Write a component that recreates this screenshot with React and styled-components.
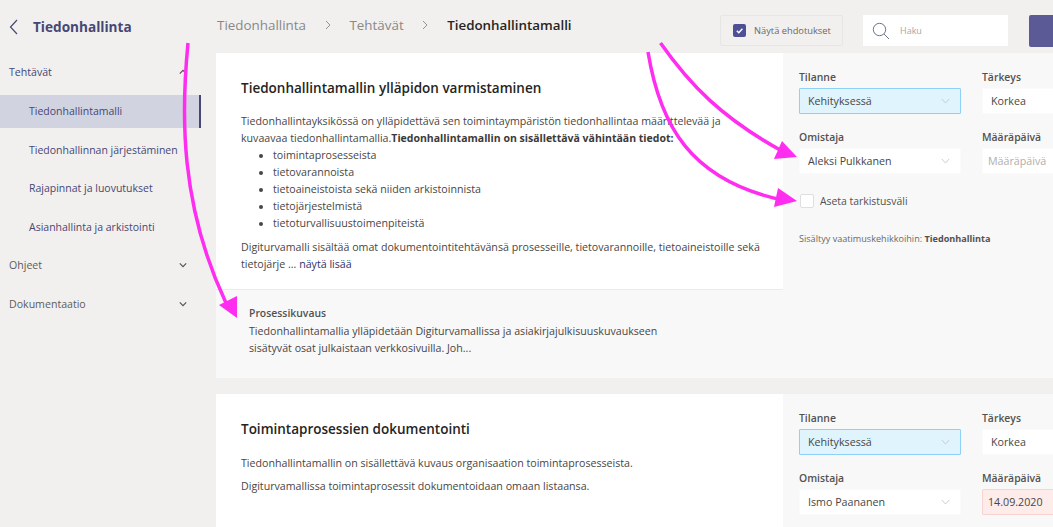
import React from "react";
import styled, { createGlobalStyle } from "styled-components";

const Global = createGlobalStyle`
  html, body { margin: 0; padding: 0; background: #f1f0ef; }
  * { box-sizing: border-box; }
`;

const Page = styled.div`
  position: relative;
  width: 1053px;
  height: 527px;
  overflow: hidden;
  display: flex;
  background: #f1f0ef;
  font-family: "Open Sans", "Noto Sans", sans-serif;
  color: #484644;
`;

const Sidebar = styled.aside`
  width: 216px;
  flex: none;
  display: flex;
  flex-direction: column;
`;

const SideHeader = styled.div`
  height: 53px;
  display: flex;
  align-items: center;
  gap: 14px;
  padding-left: 9px;
  font-size: 13.6px;
  font-weight: 700;
  color: #464775;
  svg { flex: none; }
`;

const Group = styled.div`
  width: 190px;
  height: 38.5px;
  padding: 0 0 0 9px;
  display: flex;
  align-items: center;
  justify-content: space-between;
  font-size: 10.6px;
  color: ${(p) => (p.$open ? "#464775" : "#5e5c5a")};
  svg { margin-right: 3px; }
`;

const NavItem = styled.div`
  width: 201px;
  height: ${(p) => (p.$active ? "33px" : "38.5px")};
  margin: ${(p) => (p.$active ? "3px 0" : "0")};
  padding: 0 0 0 29px;
  display: flex;
  align-items: center;
  font-size: 10.5px;
  white-space: nowrap;
  color: #464775;
  background: ${(p) => (p.$active ? "#d2d3e1" : "transparent")};
  border-right: ${(p) => (p.$active ? "2px solid #464775" : "none")};
`;

const Main = styled.main`
  flex: 1;
  min-width: 0;
  display: flex;
  flex-direction: column;
`;

const TopBar = styled.header`
  height: 53px;
  flex: none;
  display: flex;
  align-items: flex-start;
  padding: 15px 0 0 1px;
`;

const Crumbs = styled.nav`
  width: 503px;
  height: 20px;
  margin-right: 0;
  display: flex;
  align-items: center;
  font-size: 13.4px;
  color: #8a8886;
  flex: none;
`;

const CrumbSep = styled.span`
  width: 43.5px;
  display: flex;
  justify-content: center;
`;

const CrumbCurrent = styled.span`
  font-weight: 600;
  color: #252423;
  font-size: 13.35px;
`;

const SuggestToggle = styled.div`
  width: 123px;
  height: 31px;
  border: 1px solid #e8e6e5;
  border-radius: 2px;
  display: flex;
  align-items: center;
  gap: 8px;
  padding-left: 12px;
  font-size: 9.3px;
  color: #6a6866;
  white-space: nowrap;
  flex: none;
`;

const CheckedBox = styled.span`
  width: 13px;
  height: 13px;
  border-radius: 2px;
  background: #4f4f95;
  display: flex;
  align-items: center;
  justify-content: center;
`;

const Search = styled.div`
  width: 145px;
  height: 31px;
  margin-left: 20px;
  background: #fff;
  display: flex;
  align-items: center;
  gap: 10px;
  padding-left: 9px;
  font-size: 9px;
  color: #a8a6a4;
  flex: none;
`;

const PrimaryButton = styled.div`
  width: 30px;
  height: 32px;
  margin-left: 21px;
  flex: none;
  background: #5b5a97;
  border-radius: 2px;
`;

const Card = styled.section`
  display: flex;
  margin-bottom: 16px;
  flex: none;
  height: ${(p) => p.$h}px;
`;

const CardBody = styled.div`
  width: 567px;
  flex: none;
  display: flex;
  flex-direction: column;
  background: #fff;
`;

const CardText = styled.div`
  padding: 26px 0 0 25px;
  height: ${(p) => p.$h}px;
  flex: none;
`;

const CardTitle = styled.h2`
  margin: 0 0 ${(p) => p.$mb ?? 16}px;
  font-size: 13.5px;
  line-height: 18px;
  font-weight: 600;
  color: #252423;
  white-space: nowrap;
`;

const Para = styled.p`
  margin: 0 0 ${(p) => p.$mb ?? 0}px;
  font-size: 10.65px;
  line-height: 17px;
  color: #484644;
  white-space: nowrap;
  b { font-weight: 700; font-size: 10.5px; color: #3b3a39; }
`;

const BulletList = styled.ul`
  margin: 0 0 7px;
  padding: 0 0 0 32px;
  font-size: 10.65px;
  line-height: 17px;
  li { padding: 0; }
`;

const MoreLink = styled.span`
  color: #30316b;
`;

const ProcessBox = styled.div`
  flex: 1;
  background: #f8f8f8;
  border-top: 1px solid #ecebea;
  padding: 15px 0 0 33px;
`;

const ProcessTitle = styled.div`
  font-size: 10.4px;
  font-weight: 600;
  line-height: 17px;
  color: #53514f;
  margin-bottom: 1px;
`;

const SidePanel = styled.aside`
  flex: 1;
  min-width: 0;
  background: #f8f8f8;
  padding: 16px 0 0 16px;
  overflow: hidden;
`;

const FieldGrid = styled.div`
  display: grid;
  grid-template-columns: 162px 100px;
  column-gap: 21px;
  row-gap: 15px;
`;

const Field = styled.div`
  display: flex;
  flex-direction: column;
  gap: 2px;
`;

const FieldLabel = styled.label`
  font-size: 10.4px;
  line-height: 17px;
  font-weight: 600;
  color: #53514f;
  white-space: nowrap;
`;

const Select = styled.div`
  height: 26px;
  background: ${(p) => (p.$tint === "blue" ? "#e0f4fe" : p.$tint === "red" ? "#fdecea" : "#fff")};
  border: 1px solid ${(p) => (p.$tint === "blue" ? "#8fd0f6" : p.$tint === "red" ? "#f9d3d0" : "#fbfbfb")};
  border-radius: 1px;
  display: flex;
  align-items: center;
  justify-content: space-between;
  padding: 0 10px 0 ${(p) => p.$pl ?? 8}px;
  font-size: 10.7px;
  color: ${(p) => (p.$muted ? "#b0aeac" : "#484644")};
  white-space: nowrap;
`;

const CheckRow = styled.div`
  display: flex;
  align-items: center;
  gap: 6px;
  margin: 20px 0 0 1px;
  font-size: 10.4px;
  color: #53514f;
`;

const EmptyBox = styled.span`
  width: 14px;
  height: 14px;
  background: #fff;
  border: 1px solid #e1dfdd;
  border-radius: 2px;
`;

const Note = styled.div`
  margin-top: 25px;
  font-size: 9.1px;
  line-height: 12px;
  color: #6a6866;
  white-space: nowrap;
  b { font-weight: 700; color: #53514f; }
`;

const Arrows = styled.svg`
  position: absolute;
  inset: 0;
  pointer-events: none;
`;

const Chevron = ({ dir = "down", size = 8, color = "#53514f", w = 1.4 }) => {
  const d = { down: "M1 3l4 4 4-4", up: "M1 7l4-4 4 4", right: "M3 1l4 4-4 4", left: "M7 1L3 5l4 4" }[dir];
  return (
    <svg width={size} height={size} viewBox="0 0 10 10" fill="none" stroke={color} strokeWidth={w}>
      <path d={d} />
    </svg>
  );
};

const Caret = () => (
  <svg width="9" height="6" viewBox="0 0 11 7" fill="none" stroke="#c4c3c2" strokeWidth="1">
    <path d="M1 1l4.5 5L10 1" />
  </svg>
);

const Fields = ({ owner, date }) => (
  <FieldGrid>
    <Field>
      <FieldLabel>Tilanne</FieldLabel>
      <Select $tint="blue"><span>Kehityksessä</span><Caret /></Select>
    </Field>
    <Field>
      <FieldLabel>Tärkeys</FieldLabel>
      <Select><span>Korkea</span></Select>
    </Field>
    <Field>
      <FieldLabel>Omistaja</FieldLabel>
      <Select><span>{owner}</span><Caret /></Select>
    </Field>
    <Field>
      <FieldLabel>Määräpäivä</FieldLabel>
      {date ? (
        <Select $tint="red" $pl={5}><span>{date}</span></Select>
      ) : (
        <Select $muted $pl={5}><span>Määräpäivä</span></Select>
      )}
    </Field>
  </FieldGrid>
);

export default function App() {
  return (
    <Page>
      <Global />
      <Sidebar>
        <SideHeader>
          <svg width="10" height="16" viewBox="0 0 10 16" fill="none" stroke="#464775" strokeWidth="1.2">
            <path d="M8 1L1.5 8 8 15" />
          </svg>
          Tiedonhallinta
        </SideHeader>
        <Group $open>Tehtävät<Chevron dir="up" /></Group>
        <NavItem $active>Tiedonhallintamalli</NavItem>
        <NavItem>Tiedonhallinnan järjestäminen</NavItem>
        <NavItem>Rajapinnat ja luovutukset</NavItem>
        <NavItem>Asianhallinta ja arkistointi</NavItem>
        <Group>Ohjeet<Chevron /></Group>
        <Group>Dokumentaatio<Chevron /></Group>
      </Sidebar>
      <Main>
        <TopBar>
          <Crumbs>
            <span>Tiedonhallinta</span>
            <CrumbSep><Chevron dir="right" size={10} color="#8a8886" w={0.9} /></CrumbSep>
            <span>Tehtävät</span>
            <CrumbSep><Chevron dir="right" size={10} color="#8a8886" w={0.9} /></CrumbSep>
            <CrumbCurrent>Tiedonhallintamalli</CrumbCurrent>
          </Crumbs>
          <SuggestToggle>
            <CheckedBox>
              <svg width="9" height="9" viewBox="0 0 10 10" fill="none" stroke="#fff" strokeWidth="1.6">
                <path d="M2 5.2l2.2 2.2L8.2 3" />
              </svg>
            </CheckedBox>
            Näytä ehdotukset
          </SuggestToggle>
          <Search>
            <svg width="18" height="18" viewBox="0 0 18 18" fill="none" stroke="#6b7488" strokeWidth="1">
              <circle cx="7.5" cy="7.5" r="6.2" />
              <path d="M12 12l5 5" />
            </svg>
            Haku
          </Search>
          <PrimaryButton />
        </TopBar>

        <Card $h={325}>
          <CardBody>
            <CardText $h={236}>
              <CardTitle>Tiedonhallintamallin ylläpidon varmistaminen</CardTitle>
              <Para>Tiedonhallintayksikössä on ylläpidettävä sen toimintaympäristön tiedonhallintaa määrittelevää ja</Para>
              <Para>kuvaavaa tiedonhallintamallia.<b>Tiedonhallintamallin on sisällettävä vähintään tiedot:</b></Para>
              <BulletList>
                <li>toimintaprosesseista</li>
                <li>tietovarannoista</li>
                <li>tietoaineistoista sekä niiden arkistoinnista</li>
                <li>tietojärjestelmistä</li>
                <li>tietoturvallisuustoimenpiteistä</li>
              </BulletList>
              <Para>Digiturvamalli sisältää omat dokumentointitehtävänsä prosesseille, tietovarannoille, tietoaineistoille sekä</Para>
              <Para>tietojärje ... <MoreLink>näytä lisää</MoreLink></Para>
            </CardText>
            <ProcessBox>
              <ProcessTitle>Prosessikuvaus</ProcessTitle>
              <Para>Tiedonhallintamallia ylläpidetään Digiturvamallissa ja asiakirjajulkisuuskuvaukseen</Para>
              <Para>sisätyvät osat julkaistaan verkkosivuilla. Joh...</Para>
            </ProcessBox>
          </CardBody>
          <SidePanel>
            <Fields owner="Aleksi Pulkkanen" />
            <CheckRow><EmptyBox />Aseta tarkistusväli</CheckRow>
            <Note>Sisältyy vaatimuskehikkoihin: <b>Tiedonhallinta</b></Note>
          </SidePanel>
        </Card>

        <Card $h={140}>
          <CardBody>
            <CardText $h={140}>
              <CardTitle $mb={17}>Toimintaprosessien dokumentointi</CardTitle>
              <Para $mb={6}>Tiedonhallintamallin on sisällettävä kuvaus organisaation toimintaprosesseista.</Para>
              <Para>Digiturvamallissa toimintaprosessit dokumentoidaan omaan listaansa.</Para>
            </CardText>
          </CardBody>
          <SidePanel>
            <Fields owner="Ismo Paananen" date="14.09.2020" />
          </SidePanel>
        </Card>
      </Main>

      <Arrows width="1053" height="527" viewBox="0 0 1053 527">
        <g fill="none" stroke="#ff2df0" strokeWidth="3.5">
          <path d="M188 43C181 115 180 205 226 303" />
          <path d="M660.5 43C690 85 722 118 782 151" />
          <path d="M648 52C660 125 690 180 782 200" />
        </g>
        <g fill="#ff2df0">
          <polygon points="219,305 237,296 237,318" />
          <polygon points="774,159 782,141 797,157" />
          <polygon points="774,207 778,188 797,201" />
        </g>
      </Arrows>
    </Page>
  );
}
